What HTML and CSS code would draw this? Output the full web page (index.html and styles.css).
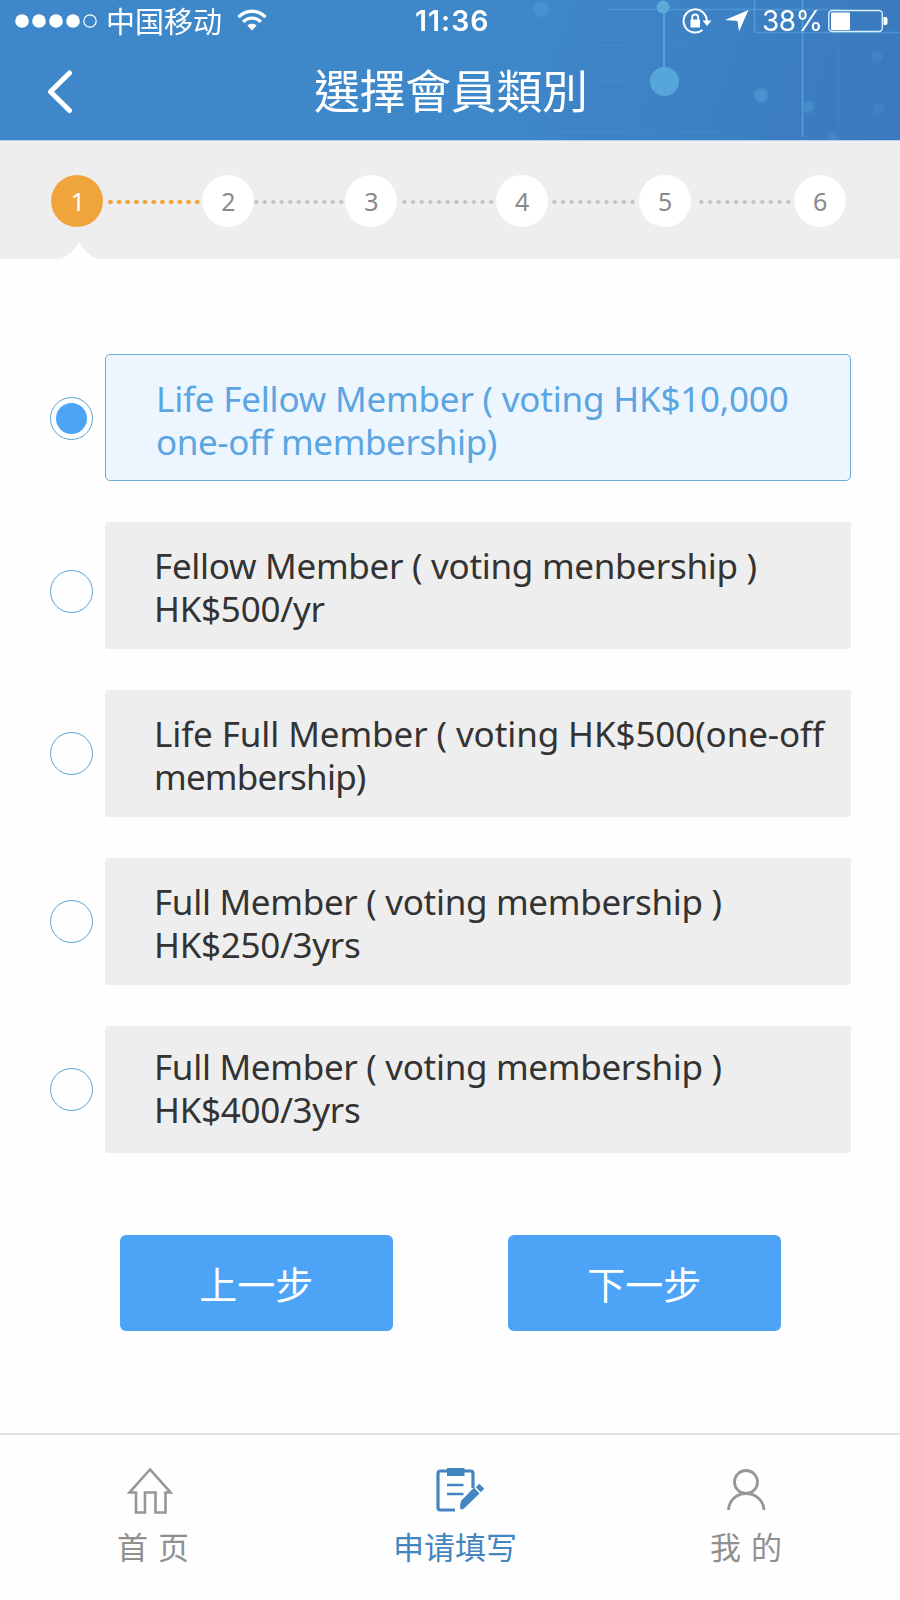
FILE: index.html
```html
<!DOCTYPE html>
<html lang="zh-Hant">
<head>
<meta charset="utf-8">
<title>選擇會員類別</title>
<link rel="stylesheet" href="styles.css">
</head>
<body>
<header class="header">
  <svg class="header-art" width="900" height="140" viewBox="0 0 900 140">
    <defs>
      <linearGradient id="sky" x1="500" y1="0" x2="900" y2="140" gradientUnits="userSpaceOnUse">
        <stop offset="0" stop-color="#3e88ca"/>
        <stop offset=".5" stop-color="#3c81c3"/>
        <stop offset="1" stop-color="#3a79bd"/>
      </linearGradient>
      <filter id="soft"><feGaussianBlur stdDeviation="1.6"/></filter>
    </defs>
    <rect width="900" height="140" fill="url(#sky)"/>
    <g stroke="#5fa8dd" fill="none">
      <path d="M664 8V70" stroke-width="2" opacity=".8"/>
      <path d="M802.500 0V137" stroke-width="1.500" opacity=".8"/>
      <path d="M754.500 0V32" stroke-width="1.500" opacity=".7"/>
      <path d="M608 9.500H840M754 32.500H899" stroke-width="1.500" opacity=".55"/>
      <path d="M600 45H705M600 82H650M560 132H720M838 30V130" opacity=".2"/>
    </g>
    <circle cx="663" cy="7" r="6.500" fill="#5baadb"/>
    <circle cx="664.500" cy="81.500" r="14.500" fill="#57a6da"/>
    <g fill="#529fd8" filter="url(#soft)">
      <circle cx="541" cy="9" r="8" opacity=".45"/>
      <circle cx="761" cy="95.500" r="7" opacity=".65"/>
      <circle cx="808" cy="107" r="6" opacity=".5"/>
      <circle cx="877" cy="57" r="6" opacity=".25"/>
      <circle cx="878" cy="109" r="6" opacity=".25"/>
      <circle cx="833" cy="138" r="6" opacity=".35"/>
    </g>
  </svg>
  <div class="status">
    <div class="status-left">
      <svg width="83" height="16" viewBox="0 0 83 16" fill="#fff">
        <circle cx="7" cy="8" r="6.800"/><circle cx="24" cy="8" r="6.800"/><circle cx="41" cy="8" r="6.800"/><circle cx="58" cy="8" r="6.800"/>
        <circle cx="75" cy="8" r="6.200" fill="none" stroke="#fff" stroke-width="1.200"/>
      </svg>
      <span class="carrier">中国移动</span>
      <svg class="wifi" width="30" height="22" viewBox="0 0 30 22" fill="none" stroke="#fff" stroke-width="3.400">
        <path d="M1.500 8.200C9 .2 21 .2 28.500 8.200"/>
        <path d="M6.200 12.900C11.200 7.800 18.800 7.800 23.800 12.900"/>
        <path d="M15 21.500L10.300 16.600C12.800 14 17.200 14 19.700 16.600Z" fill="#fff" stroke="none"/>
      </svg>
    </div>
    <span class="time">11:36</span>
    <div class="status-right">
      <svg width="30" height="26" viewBox="0 0 30 26" fill="none" stroke="#fff">
        <path d="M24.800 13A11.600 11.600 0 1 0 20.500 22" stroke-width="2"/>
        <path d="M20.500 12.500H29.500L25 18Z" fill="#fff" stroke="none"/>
        <rect x="8.500" y="11.500" width="9.500" height="8" fill="#fff" stroke="none"/>
        <path d="M10.200 12V9.500a3 3 0 0 1 6 0V12" stroke-width="1.800"/>
      </svg>
      <svg class="arrow" width="24" height="22" viewBox="0 0 24 22" fill="#fff"><path d="M23.500 0L14 21.500L12.500 11L0 10Z"/></svg>
      <span class="percent">38%</span>
      <svg width="60" height="24" viewBox="0 0 60 24">
        <rect x=".8" y="1.500" width="53.500" height="21" rx="3.500" fill="none" stroke="#d9f1ff" stroke-width="1.400"/>
        <rect x="3" y="3.500" width="19" height="17.500" rx="1" fill="#fff"/>
        <path d="M55.500 8h2q2 0 2 2v4q0 2-2 2h-2z" fill="#fff"/>
      </svg>
    </div>
  </div>
  <div class="titlebar">
    <svg class="back" width="26" height="44" viewBox="0 0 26 44" fill="none" stroke="#fff" stroke-width="5" stroke-linecap="round" stroke-linejoin="round"><path d="M22.500 3L3.500 21.800L22.500 40.500"/></svg>
    <h1 class="title">選擇會員類別</h1>
  </div>
</header>

<nav class="steps">
  <span class="step step-active">1</span>
  <i class="dots dots-active"></i>
  <span class="step">2</span>
  <i class="dots dots-2"></i>
  <span class="step">3</span>
  <i class="dots dots-3"></i>
  <span class="step">4</span>
  <i class="dots dots-4"></i>
  <span class="step">5</span>
  <i class="dots dots-5"></i>
  <span class="step">6</span>
  <svg class="notch" width="38" height="17" viewBox="0 0 38 17" fill="#fff"><path d="M0 17C9 14 15 8 19 0C23 8 29 14 38 17Z"/></svg>
</nav>

<main class="options">
  <div class="option selected">
    <span class="radio"></span>
    <div class="card"><span class="line l1">Life Fellow Member ( voting HK$10,000</span><span class="line l2">one-off membership)</span></div>
  </div>
  <div class="option second">
    <span class="radio"></span>
    <div class="card"><span class="line l3">Fellow Member ( voting menbership )</span><span class="line l4">HK$500/yr</span></div>
  </div>
  <div class="option">
    <span class="radio"></span>
    <div class="card"><span class="line l5">Life Full Member ( voting HK$500(one-off</span><span class="line l6">membership)</span></div>
  </div>
  <div class="option">
    <span class="radio"></span>
    <div class="card"><span class="line l7">Full Member ( voting membership )</span><span class="line l8">HK$250/3yrs</span></div>
  </div>
  <div class="option last">
    <span class="radio"></span>
    <div class="card"><span class="line l7">Full Member ( voting membership )</span><span class="line l8">HK$400/3yrs</span></div>
  </div>
</main>

<div class="actions">
  <button class="btn">上一步</button>
  <button class="btn">下一步</button>
</div>

<footer class="tabs">
  <a class="tab tab-home">
    <svg width="46" height="48" viewBox="0 0 46 48" fill="none" stroke="#969696" stroke-width="2.600"><path d="M23 2.500L2.500 25.500H9V45.500H18V25.500H28.500V45.500H38.500V25.500H43.500Z"/></svg>
    <span class="label">首 页</span>
  </a>
  <a class="tab tab-form">
    <svg width="50" height="48" viewBox="0 0 50 48" fill="none" stroke="#4285c0">
      <path d="M12 4H5.500Q3 4 3 6.500V40.500Q3 43 5.500 43H20" stroke-width="3.200"/>
      <path d="M28 4H35.500Q38 4 38 6.500V21" stroke-width="3.200"/>
      <path d="M12 1H29.500V9H12Z" fill="#4285c0" stroke="none"/>
      <path d="M12 18H28.500M12 27H28.500" stroke-width="2.600"/>
      <path d="M28.500 42L44.500 26.500L39 20.500L26.500 33.500Q24.500 37 25.500 42.500Z" fill="#4285c0" stroke="none"/>
      <path d="M42.500 18.500L47.500 23.500" stroke-width="5"/>
    </svg>
    <span class="label">申请填写</span>
  </a>
  <a class="tab tab-me">
    <svg width="40" height="48" viewBox="0 0 40 48" fill="none" stroke="#969696" stroke-width="2.800"><circle cx="20" cy="15" r="11.500"/><path d="M2.500 43C3 33 11 26.500 20 26.500S37.500 33 38 43"/></svg>
    <span class="label">我 的</span>
  </a>
</footer>
</body>
</html>
```
FILE: styles.css
```css
* { box-sizing: border-box; }
body {
  margin: 0;
  width: 900px;
  height: 1600px;
  overflow: hidden;
  background: #fefefe;
  font-family: "Noto Sans", "Noto Sans CJK SC", sans-serif;
  display: flex;
  flex-direction: column;
}
svg { display: block; flex: none; }

.header { position: relative; height: 140px; flex: none; color: #fff; }
.header-art { position: absolute; inset: 0; }
.status {
  position: relative;
  height: 42px;
  display: grid;
  grid-template-columns: 415px 267px 218px;
  align-items: center;
}
.status-left { display: flex; align-items: center; padding-left: 15px; }
.carrier {
  margin-left: 8px;
  margin-top: -2px;
  width: 116px;
  font: 29px/40px "Noto Sans CJK SC", sans-serif;
  white-space: nowrap;
}
.wifi { margin-left: 15px; margin-top: -2px; }
.time { font: 600 28.500px/42px Inter, sans-serif; letter-spacing: 1px; white-space: nowrap; }
.status-right { display: flex; align-items: center; }
.arrow { margin-left: 13px; }
.percent { margin-left: 13px; width: 66px; font: 28px/42px Inter, sans-serif; letter-spacing: -.6px; white-space: nowrap; }
.titlebar { position: relative; height: 98px; display: flex; align-items: center; }
.back { margin-left: 47px; margin-top: 2px; }
.title {
  margin: -6px 0 0 241px;
  font: 400 46px/92px "Noto Sans CJK TC", sans-serif;
  letter-spacing: -.4px;
}

.steps {
  position: relative;
  height: 119px;
  flex: none;
  display: flex;
  align-items: center;
  padding: 1px 0 0 51px;
  background: #eee;
  border-top: 1px solid #b9d3ee;
}
.step {
  flex: none;
  width: 52px;
  height: 52px;
  border-radius: 50%;
  background: #fff;
  color: #8a8a8a;
  font: 25px/53px "Noto Sans", sans-serif;
  text-align: center;
}
.step-active { background: #f0a43c; color: #fff; padding-left: 2px; }
.dots {
  flex: none;
  height: 6px;
  width: 95px;
  margin: 2px 0 0;
  background: radial-gradient(circle, #c4c4c4 1.700px, transparent 2.400px) 0 0 / 8.700px 6px repeat-x;
}
.dots-active {
  width: 95.700px;
  margin-left: 3px;
  margin-right: .8px;
  background-image: radial-gradient(circle, #f0a43c 1.900px, transparent 2.600px);
}
.dots-2 { width: 93.500px; margin-left: -2px; margin-right: -.5px; background-size: 8.500px 6px; }
.dots-3 { width: 95.700px; margin-left: 2.300px; margin-right: .7px; }
.dots-4 { width: 87px; margin-left: 2px; margin-right: 2px; }
.dots-5 { width: 95.700px; margin-left: 6.300px; margin-right: 1px; }
.notch { position: absolute; left: 60px; bottom: 0; }

.options { margin-top: 95px; display: flex; flex-direction: column; gap: 41px; flex: none; }
.option { display: flex; align-items: center; height: 127px; padding-left: 50px; }
.radio {
  width: 43px;
  height: 43px;
  border: 1px solid #5aa3cf;
  border-radius: 50%;
  display: grid;
  place-items: center;
}
.selected .radio { margin-top: 2px; }
.second .radio { margin-top: 12px; }
.selected .radio::after { content: ""; width: 31px; height: 31px; border-radius: 50%; background: #4da4f5; }
.card {
  margin-left: 12px;
  width: 746px;
  height: 127px;
  padding: 22px 0 0 49px;
  border-radius: 3px;
  background: #eee;
  color: #333;
  font-size: 35px;
  line-height: 43px;
  display: flex;
  flex-direction: column;
}
.selected .card {
  padding: 21.500px 0 0 50px;
  background: #edf6fe;
  border: 1px solid #6caed6;
  border-radius: 5px;
  color: #5ba5e2;
}
.last .card { padding-top: 19px; }
.line { white-space: nowrap; }
.l1 { letter-spacing: -.2px; }
.l2 { letter-spacing: -.4px; }
.l3 { letter-spacing: -.29px; }
.l4 { letter-spacing: -.25px; }
.l5 { letter-spacing: -.1px; }
.l6 { letter-spacing: -.8px; }
.l7 { letter-spacing: -.31px; }
.l8 { letter-spacing: -.3px; }

.actions { margin-top: 82px; padding-left: 120px; display: flex; gap: 115.500px; flex: none; }
.btn {
  width: 272.500px;
  height: 96px;
  border: 0;
  border-radius: 6px;
  background: #4da4f7;
  color: #fff;
  padding: 0;
  font: 38px/92px "Noto Sans CJK SC", sans-serif;
}

.tabs {
  margin-top: 102px;
  height: 167px;
  flex: none;
  border-top: 2px solid #e2e2e2;
  display: grid;
  grid-template-columns: 300px 300px 300px;
  color: #909090;
}
.tab { padding-top: 32px; }
.label { display: block; font: 31px/44px "Noto Sans CJK SC", sans-serif; margin-top: 9px; white-space: pre; word-spacing: 3px; }
.tab-home svg { margin-left: 127px; }
.tab-home .label { margin-left: 117px; }
.tab-form { color: #4285c0; }
.tab-form svg { margin-left: 135px; }
.tab-form .label { margin-left: 93px; }
.tab-me svg { margin-left: 126px; }
.tab-me .label { margin-left: 110px; }
```
